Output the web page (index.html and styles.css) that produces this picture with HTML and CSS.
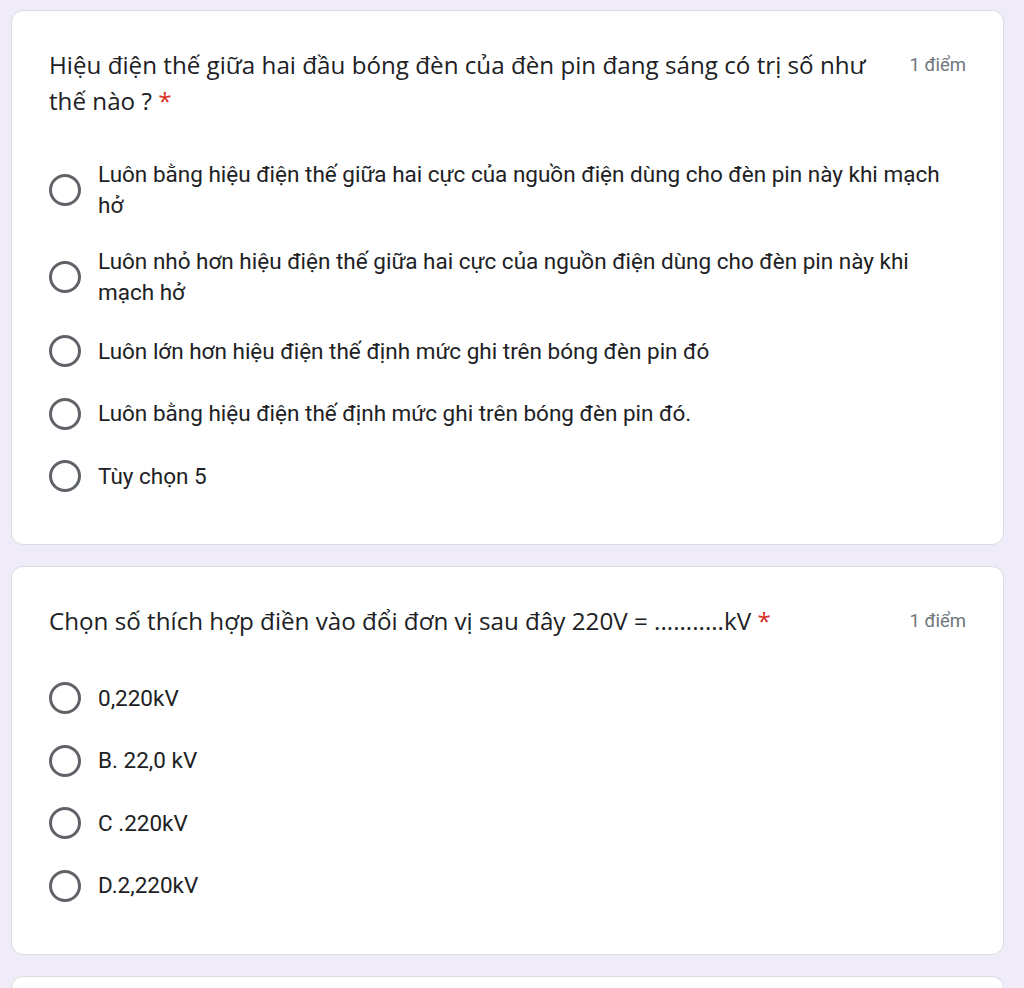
FILE: index.html
```html
<!DOCTYPE html>
<html lang="vi">
<head>
<meta charset="utf-8">
<title>Form</title>
<link rel="stylesheet" href="styles.css">
</head>
<body>
<main class="form">
  <section class="card">
    <div class="q-head">
      <div class="q-title">Hiệu điện thế giữa hai đầu bóng đèn của đèn pin đang sáng có trị số như thế nào ? <span class="req">*</span></div>
      <div class="q-points">1 điểm</div>
    </div>
    <div class="options">
      <label class="opt"><span class="radio"></span><span class="opt-text">Luôn bằng hiệu điện thế giữa hai cực của nguồn điện dùng cho đèn pin này khi mạch hở</span></label>
      <label class="opt"><span class="radio"></span><span class="opt-text">Luôn nhỏ hơn hiệu điện thế giữa hai cực của nguồn điện dùng cho đèn pin này khi mạch hở</span></label>
      <label class="opt"><span class="radio"></span><span class="opt-text">Luôn lớn hơn hiệu điện thế định mức ghi trên bóng đèn pin đó</span></label>
      <label class="opt"><span class="radio"></span><span class="opt-text">Luôn bằng hiệu điện thế định mức ghi trên bóng đèn pin đó.</span></label>
      <label class="opt"><span class="radio"></span><span class="opt-text">Tùy chọn 5</span></label>
    </div>
  </section>
  <section class="card">
    <div class="q-head">
      <div class="q-title">Chọn số thích hợp điền vào đổi đơn vị sau đây 220V = ...........kV <span class="req">*</span></div>
      <div class="q-points">1 điểm</div>
    </div>
    <div class="options">
      <label class="opt"><span class="radio"></span><span class="opt-text">0,220kV</span></label>
      <label class="opt"><span class="radio"></span><span class="opt-text">B. 22,0 kV</span></label>
      <label class="opt"><span class="radio"></span><span class="opt-text">C .220kV</span></label>
      <label class="opt"><span class="radio"></span><span class="opt-text">D.2,220kV</span></label>
    </div>
  </section>
  <section class="card card-next"></section>
</main>
</body>
</html>
```
FILE: styles.css
```css
html, body {
  margin: 0;
  padding: 0;
  background: #f0ebf8;
  overflow: hidden;
}
body {
  padding: 10px 20px 0 11px;
}
.form {
  display: flex;
  flex-direction: column;
  gap: 21px;
}
.card {
  background: #fff;
  border: 1px solid #dadce0;
  border-radius: 12px;
  padding: 36px 37px 49px 37px;
}
.card-next {
  height: 200px;
}
.q-head {
  display: flex;
  align-items: flex-start;
}
.q-title {
  flex: 1;
  font-family: "Open Sans", sans-serif;
  font-size: 24.2px;
  line-height: 36px;
  color: #202124;
}
.req {
  color: #d93025;
}
.q-points {
  margin-left: 40px;
  font-family: Roboto, sans-serif;
  font-size: 18.5px;
  line-height: 36px;
  color: #70757a;
  white-space: nowrap;
}
.options {
  margin-top: 40px;
  display: flex;
  flex-direction: column;
  gap: 24.5px;
}
.opt {
  display: flex;
  align-items: center;
  min-height: 38px;
  padding-right: 16px;
}
.radio {
  flex: none;
  box-sizing: border-box;
  width: 32px;
  height: 32px;
  border: 3px solid #5f6368;
  border-radius: 50%;
  margin-right: 17px;
}
.opt-text {
  font-family: Roboto, sans-serif;
  font-size: 22.5px;
  line-height: 31px;
  color: #202124;
}
```
